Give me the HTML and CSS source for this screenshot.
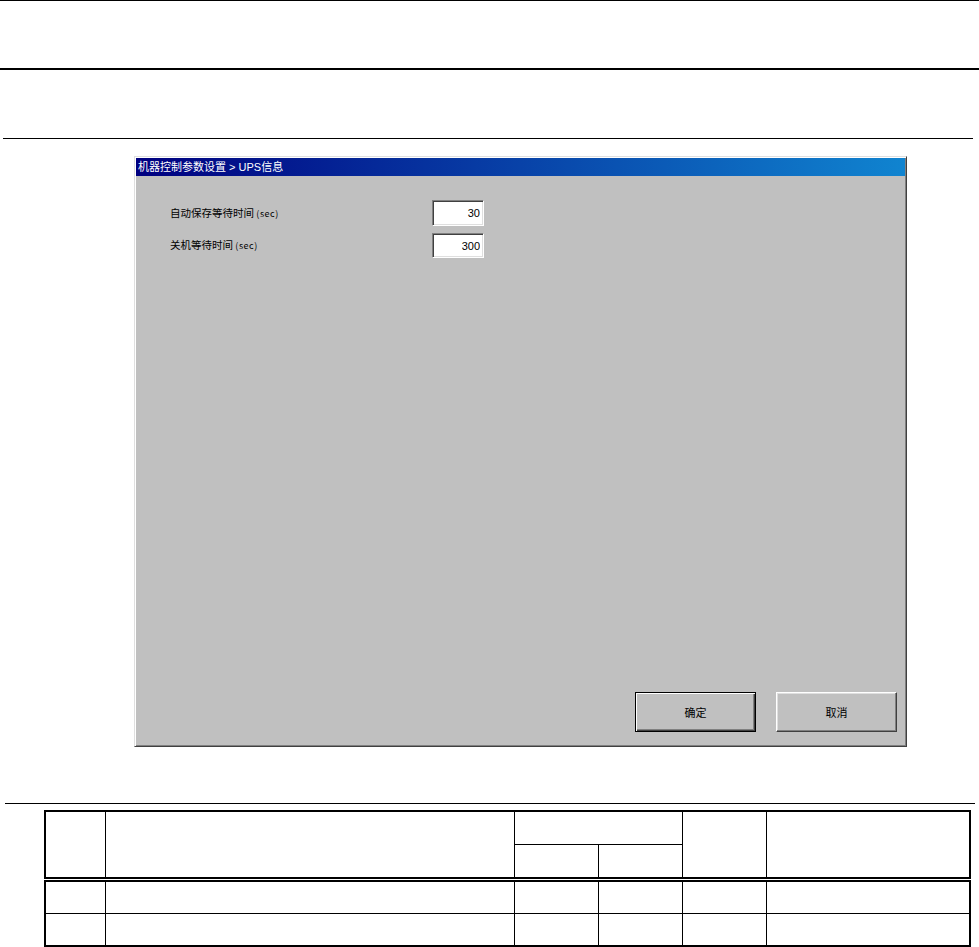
FILE: index.html
```html
<!DOCTYPE html>
<html>
<head>
<meta charset="utf-8">
<title>UPS信息</title>
<link rel="stylesheet" href="styles.css">
</head>
<body>
<div class="page-head"></div>
<div class="page-sub"></div>

<div class="dialog">
  <div class="caption">机器控制参数设置 &gt; UPS信息</div>
  <div class="dialog-body">
    <div class="field">
      <label for="autosave">自动保存等待时间 <span class="unit">(sec)</span></label>
      <input id="autosave" type="text" value="30">
    </div>
    <div class="field">
      <label for="shutdown">关机等待时间 <span class="unit">(sec)</span></label>
      <input id="shutdown" type="text" value="300">
    </div>
  </div>
  <div class="dialog-buttons">
    <button type="button" class="default">确定</button>
    <button type="button">取消</button>
  </div>
</div>

<div class="page-rule"></div>

<table class="spec">
  <colgroup>
    <col class="no">
    <col class="item">
    <col class="val">
    <col class="val">
    <col class="val">
    <col class="note">
  </colgroup>
  <thead>
    <tr class="h1">
      <th rowspan="2"></th>
      <th rowspan="2"></th>
      <th colspan="2"></th>
      <th rowspan="2"></th>
      <th rowspan="2"></th>
    </tr>
    <tr class="h2">
      <th></th>
      <th></th>
    </tr>
  </thead>
  <tbody>
    <tr><td></td><td></td><td></td><td></td><td></td><td></td></tr>
    <tr><td></td><td></td><td></td><td></td><td></td><td></td></tr>
  </tbody>
</table>
</body>
</html>
```

FILE: styles.css
```css
body { margin: 0; background: white; font: 11px/1 "Liberation Sans", "Noto Sans CJK SC", sans-serif; color: black; }

.page-head { height: 67px; border-top: 1px solid black; border-bottom: 2px solid black; }
.page-sub { height: 68px; margin: 0 6px 0 3px; border-bottom: 1px solid black; }

.dialog { display: flex; flex-direction: column; box-sizing: border-box; width: 773px; height: 591px; margin: 17px 0 0 134px; padding: 1px; background: #c0c0c0; border: 1px solid; border-color: #dfdfdf #404040 #404040 #dfdfdf; box-shadow: inset 1px 1px white, inset -1px -1px #808080; }
.caption { height: 18px; padding: 0 2px; line-height: 18px; color: white; background: linear-gradient(to right, #000080, #1084d0); white-space: nowrap; }
.dialog-body { flex: 1; padding: 24px 0 0 34px; }
.field { display: flex; align-items: center; margin-bottom: 7px; }
.field label { width: 262px; font-family: "Noto Sans CJK SC", sans-serif; font-size: 10.5px; }
.field .unit { font-size: 9px; letter-spacing: 0.5px; }
.field input { box-sizing: border-box; width: 52px; height: 26px; margin: 0; padding: 0 3px 0 0; text-align: right; font: 11px "Liberation Sans", sans-serif; background: white; border: 1px solid; border-color: #808080 white white #808080; box-shadow: inset 1px 1px #404040, inset -1px -1px #dfdfdf; outline: none; }
.field + .field input { height: 25px; }

.dialog-buttons { display: flex; justify-content: flex-end; gap: 20px; padding: 0 8px 13px 0; }
.dialog-buttons button { box-sizing: border-box; width: 121px; height: 40px; margin: 0; padding: 0; font: 11px "Noto Sans CJK SC", sans-serif; color: black; background: #c0c0c0; border: 1px solid; border-color: white #404040 #404040 white; box-shadow: inset -1px -1px #808080, inset 1px 1px #dfdfdf; }
.dialog-buttons button.default { border: 1px solid black; box-shadow: inset 1px 1px white, inset -1px -1px #404040, inset -2px -2px #808080; }

.page-rule { width: 970px; height: 1px; margin: 56px 0 0 5px; background: black; }

table.spec { table-layout: fixed; width: 926px; margin: 6px 0 0 44px; border-collapse: collapse; border: 2px solid black; }
col.no { width: 60px; }
col.item { width: 409px; }
col.val { width: 84px; }
col.note { width: 204px; }
table.spec th,
table.spec td { padding: 0; border: 1px solid black; }
tr.h1 th { height: 32px; }
tr.h2 th { height: 32px; }
thead tr.h2 th,
thead tr.h1 th[rowspan] { border-bottom: 5px double black; }
tbody td { height: 31px; border-bottom: 2px solid black; }
```
